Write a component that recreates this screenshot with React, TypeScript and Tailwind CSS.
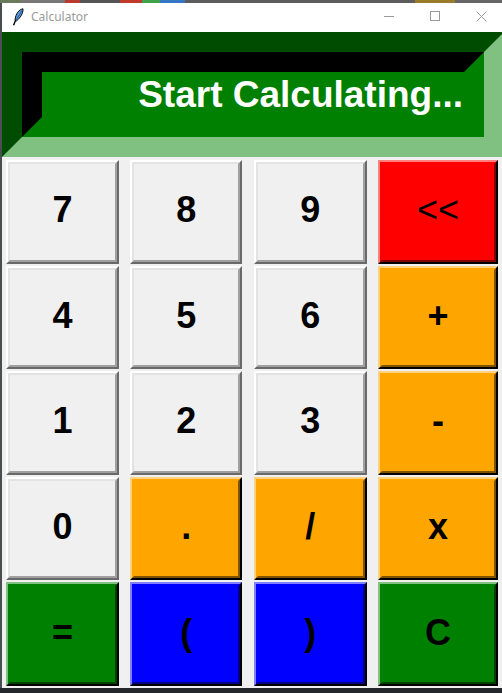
import React from "react";

type Kind = "gray" | "red" | "orange" | "green" | "blue";
type Btn = { label: string; kind: Kind; thin?: boolean };

const rows: Btn[][] = [
  [
    { label: "7", kind: "gray" },
    { label: "8", kind: "gray" },
    { label: "9", kind: "gray" },
    { label: "<<", kind: "red", thin: true },
  ],
  [
    { label: "4", kind: "gray" },
    { label: "5", kind: "gray" },
    { label: "6", kind: "gray" },
    { label: "+", kind: "orange" },
  ],
  [
    { label: "1", kind: "gray" },
    { label: "2", kind: "gray" },
    { label: "3", kind: "gray" },
    { label: "-", kind: "orange" },
  ],
  [
    { label: "0", kind: "gray" },
    { label: ".", kind: "orange" },
    { label: "/", kind: "orange" },
    { label: "x", kind: "orange" },
  ],
  [
    { label: "=", kind: "green" },
    { label: "(", kind: "blue" },
    { label: ")", kind: "blue" },
    { label: "C", kind: "green" },
  ],
];

const styles: Record<Kind, { outer: string; inner: string }> = {
  gray: {
    outer: "border-t-white border-l-white border-r-[#696969] border-b-[#696969]",
    inner:
      "border-t-[#e3e3e3] border-l-[#e3e3e3] border-r-[#a0a0a0] border-b-[#a0a0a0] bg-[#f0f0f0]",
  },
  red: {
    outer: "border-t-[#ff8080] border-l-[#ff8080] border-r-black border-b-black",
    inner:
      "border-t-[#ff0000] border-l-[#ff0000] border-r-[#800000] border-b-[#800000] bg-[#ff0000]",
  },
  orange: {
    outer: "border-t-[#ffd280] border-l-[#ffd280] border-r-black border-b-black",
    inner:
      "border-t-[#ffa500] border-l-[#ffa500] border-r-[#805200] border-b-[#805200] bg-[#ffa500]",
  },
  green: {
    outer: "border-t-[#80c080] border-l-[#80c080] border-r-black border-b-black",
    inner:
      "border-t-[#008000] border-l-[#008000] border-r-[#004000] border-b-[#004000] bg-[#008000]",
  },
  blue: {
    outer: "border-t-[#8080ff] border-l-[#8080ff] border-r-black border-b-black",
    inner:
      "border-t-[#0000ff] border-l-[#0000ff] border-r-[#000080] border-b-[#000080] bg-[#0000ff]",
  },
};

function CalcButton({ b }: { b: Btn }) {
  const s = styles[b.kind];
  return (
    <div className={`flex border-2 ${s.outer}`}>
      <div
        className={`flex-1 flex items-center justify-center border-2 ${s.inner} text-black ${
          b.thin ? "font-normal" : "font-bold"
        } text-[36px] leading-none font-['Liberation_Sans',Arial,sans-serif]`}
      >
        <span className="pb-[3px]">{b.label}</span>
      </div>
    </div>
  );
}

function Feather() {
  return (
    <svg width="12" height="18" viewBox="0 0 12 18">
      <path
        d="M11 0.8 C 7 1.5, 3.6 5.5, 3 12.2 L 4.4 13 C 8.5 9.5, 11.2 5.5, 11 0.8 Z"
        fill="#5a9be0"
        stroke="#000"
        strokeWidth="1"
      />
      <path d="M10 2.5 L 4.2 11.8" stroke="#1d3f7a" strokeWidth="0.7" />
      <path d="M3.5 12.5 L 1.6 17.2" stroke="#000" strokeWidth="1.4" />
    </svg>
  );
}

export default function App() {
  return (
    <div className="w-[502px] h-[693px] flex flex-col overflow-hidden bg-[#2a2d31]">
      {/* desktop strip on top */}
      <div className="h-[3px] flex shrink-0">
        <div className="w-[20px] bg-[#6b7a5a]" />
        <div className="w-[45px] bg-[#777]" />
        <div className="w-[15px] bg-[#b83a2c]" />
        <div className="w-[40px] bg-[#555]" />
        <div className="w-[22px] bg-[#c0392b]" />
        <div className="w-[18px] bg-[#3fa34d]" />
        <div className="w-[25px] bg-[#3577c4]" />
        <div className="w-[230px] bg-[#5c5c5c]" />
        <div className="w-[40px] bg-[#9a7b2a]" />
        <div className="flex-1 bg-[#666]" />
      </div>
      <div className="flex flex-1 min-h-0">
        <div className="w-[2px] shrink-0 bg-[#4a4e52]" />
        {/* window */}
        <div className="w-[502px] shrink-0 flex flex-col bg-[#f0f0f0]">
          {/* title bar */}
          <div className="h-[29px] shrink-0 bg-white flex items-center">
            <div className="pl-[10px] flex items-center pb-[1px]">
              <Feather />
            </div>
            <span className="ml-[7px] text-[12px] text-[#9a9a9a] font-['Noto_Sans','Open_Sans',sans-serif] pb-[1px]">
              Calculator
            </span>
            <div className="ml-auto flex h-full pb-[3px]">
              <div className="w-[46px] flex items-center justify-center">
                <div className="w-[10px] h-[1px] bg-[#9a9a9a]" />
              </div>
              <div className="w-[46px] flex items-center justify-center">
                <div className="w-[10px] h-[10px] border border-[#9a9a9a]" />
              </div>
              <div className="w-[46px] flex items-center justify-center">
                <svg width="11" height="11" viewBox="0 0 11 11">
                  <path d="M0.5 0.5 L10.5 10.5 M10.5 0.5 L0.5 10.5" stroke="#9a9a9a" strokeWidth="1" />
                </svg>
              </div>
            </div>
          </div>
          {/* display */}
          <div className="h-[125px] shrink-0 flex border-[20px] border-t-[#004c00] border-l-[#004c00] border-r-[#80c080] border-b-[#80c080]">
            <div className="flex-1 flex border-[20px] border-t-black border-l-black border-r-[#008000] border-b-[#008000] bg-[#008000]">
              <div className="flex-1 flex items-center justify-end pr-[1px] text-white font-bold text-[37px] leading-[45px] font-['Liberation_Sans',Arial,sans-serif] whitespace-nowrap">
                Start Calculating...
              </div>
            </div>
          </div>
          {/* keypad */}
          <div className="flex-1 min-h-0 grid grid-cols-[113px_112px_113px_120px] grid-rows-5 justify-between gap-y-[2px] pt-[3px] pb-[2px] pl-[4px] pr-[6px]">
            {rows.flat().map((b, i) => (
              <CalcButton key={i} b={b} />
            ))}
          </div>
        </div>
      </div>
      <div className="h-[5px] shrink-0 bg-[#24272b]" />
    </div>
  );
}
